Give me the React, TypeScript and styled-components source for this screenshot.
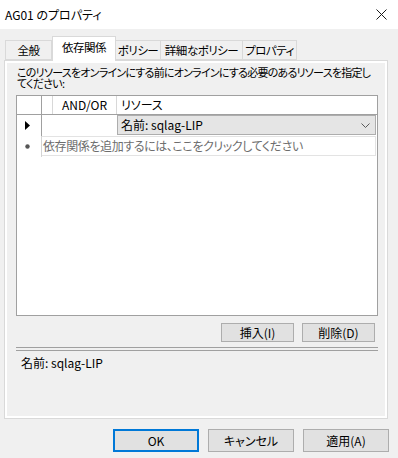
import React from 'react';
import styled, { createGlobalStyle } from 'styled-components';

const GlobalStyle = createGlobalStyle`
	html, body {
		margin: 0;
		padding: 0;
		background: #f0f0f0;
	}
	body {
		font-family: 'Noto Sans CJK JP', 'Noto Sans', sans-serif;
		font-size: 12px;
		color: #000;
		font-feature-settings: 'palt';
	}
`;

const tabs = [
	{ label: '全般', width: 47 },
	{ label: '依存関係', width: 64 },
	{ label: 'ポリシー', width: 45 },
	{ label: '詳細なポリシー', width: 82 },
	{ label: 'プロパティ', width: 54 },
];

const ACTIVE_TAB = 1;

const CloseIcon = () => (
	<svg width="11" height="11" viewBox="0 0 11 11">
		<path d="M0.5 0.5 L10.5 10.5 M10.5 0.5 L0.5 10.5" stroke="#1a1a1a" strokeWidth="1" fill="none" />
	</svg>
);

const Chevron = () => (
	<svg width="9" height="5" viewBox="0 0 9 5">
		<path d="M0.5 0.5 L4.5 4.5 L8.5 0.5" stroke="#5a5a5a" strokeWidth="1" fill="none" />
	</svg>
);

const CurrentRowMark = () => (
	<svg width="5" height="9" viewBox="0 0 5 9">
		<path d="M0 0 L5 4.5 L0 9 Z" fill="#000" />
	</svg>
);

const NewRowMark = () => (
	<svg width="5" height="5" viewBox="0 0 5 5">
		<circle cx="2.5" cy="2.5" r="2.2" fill="#555" />
	</svg>
);

const App = () => {
	return (
		<Window>
			<GlobalStyle />
			<TitleBar>
				<Title>AG01 のプロパティ</Title>
				<CloseButton>
					<CloseIcon />
				</CloseButton>
			</TitleBar>
			<Body>
				<TabStrip>
					{tabs.map((tab, idx) => (
						<Tab key={tab.label} $active={idx === ACTIVE_TAB} $width={tab.width}>
							{tab.label}
						</Tab>
					))}
				</TabStrip>
				<Panel>
					<Description>
						<Line>このリソースをオンラインにする前にオンラインにする必要のあるリソースを指定し</Line>
						<Line>てください:</Line>
					</Description>
					<Grid>
						<HeaderRow>
							<RowHeaderCell $dark />
							<HeaderCell $width={11} />
							<HeaderCell $width={64} $center>
								AND/OR
							</HeaderCell>
							<HeaderCell $grow>リソース</HeaderCell>
						</HeaderRow>
						<DataRow>
							<RowHeaderCell $dark>
								<CurrentRowMark />
							</RowHeaderCell>
							<PlainCell $width={75} />
							<ComboCell>
								<span>名前: sqlag-LIP</span>
								<Chevron />
							</ComboCell>
						</DataRow>
						<DataRow>
							<RowHeaderCell>
								<NewRowMark />
							</RowHeaderCell>
							<NewRowCell>依存関係を追加するには、ここをクリックしてください</NewRowCell>
						</DataRow>
					</Grid>
					<ActionRow>
						<SmallButton>挿入(I)</SmallButton>
						<SmallButton>削除(D)</SmallButton>
					</ActionRow>
					<Separator />
					<Selection>名前: sqlag-LIP</Selection>
				</Panel>
			</Body>
			<Footer>
				<DialogButton $default>OK</DialogButton>
				<DialogButton>キャンセル</DialogButton>
				<DialogButton>適用(A)</DialogButton>
			</Footer>
		</Window>
	);
};

export default App;

const Window = styled.div`
	width: 398px;
	height: 458px;
	display: flex;
	flex-direction: column;
	background: #f0f0f0;
	overflow: hidden;
`;

const TitleBar = styled.div`
	height: 29px;
	flex: none;
	background: #fff;
	display: flex;
	align-items: center;
	justify-content: space-between;
	padding: 0 11px 0 5px;
	box-sizing: border-box;
`;

const Title = styled.div`
	font-size: 12px;
	line-height: 14px;
`;

const CloseButton = styled.div`
	display: flex;
	align-items: center;
`;

const Body = styled.div`
	padding: 7px 10px 0 4px;
`;

const TabStrip = styled.div`
	height: 24px;
	display: flex;
	align-items: flex-end;
	padding-left: 1px;
	position: relative;
	z-index: 1;
`;

const Tab = styled.div<{ $active?: boolean; $width: number }>`
	box-sizing: border-box;
	width: ${(p) => p.$width}px;
	flex: none;
	height: ${(p) => (p.$active ? 25 : 20)}px;
	margin-bottom: ${(p) => (p.$active ? -1 : 0)}px;
	border: 1px solid #d9d9d9;
	border-bottom: ${(p) => (p.$active ? 'none' : '1px solid #d9d9d9')};
	border-left-width: ${(p) => (p.$active ? 1 : 0)}px;
	background: ${(p) => (p.$active ? '#fff' : '#f0f0f0')};
	display: flex;
	justify-content: center;
	padding-top: ${(p) => (p.$active ? 2 : 1)}px;
	white-space: nowrap;
	line-height: 16px;
	font-size: 11.5px;
	letter-spacing: -0.5px;
	&:first-child {
		border-left-width: 1px;
	}
`;

const Panel = styled.div`
	box-sizing: border-box;
	height: 359px;
	border: 1px solid #d9d9d9;
	box-shadow: inset 0 0 0 2px #fff;
	background: #f0f0f0;
	padding: 5px 9px 0 11px;
`;

const Description = styled.div`
	padding-left: 1px;
	font-size: 11px;
	letter-spacing: -0.75px;
`;

const Line = styled.div`
	line-height: 12px;
	height: 11px;
	white-space: nowrap;
	&:last-child {
		height: 12px;
	}
`;

const Grid = styled.div`
	margin-top: 6px;
	height: 221px;
	box-sizing: border-box;
	border: 1px solid #a0a0a0;
	background: #fff;
	display: flex;
	flex-direction: column;
`;

const HeaderRow = styled.div`
	height: 18px;
	display: flex;
	border-bottom: 1px solid #a0a0a0;
`;

const DataRow = styled.div`
	height: 21px;
	display: flex;
`;

const RowHeaderCell = styled.div<{ $dark?: boolean }>`
	width: 25px;
	flex: none;
	box-sizing: border-box;
	border-right: 1px solid ${(p) => (p.$dark ? '#a0a0a0' : '#d4d4d4')};
	display: flex;
	align-items: center;
	justify-content: center;
	padding-right: 4px;
`;

const HeaderCell = styled.div<{ $width?: number; $grow?: boolean; $center?: boolean }>`
	box-sizing: border-box;
	${(p) => (p.$grow ? 'flex: 1;' : `width: ${p.$width}px; flex: none;`)}
	border-right: ${(p) => (p.$grow ? 'none' : '1px solid #d8d8d8')};
	display: flex;
	align-items: center;
	justify-content: ${(p) => (p.$center ? 'center' : 'flex-start')};
	padding-left: ${(p) => (p.$center ? 0 : 4)}px;
	line-height: 14px;
`;

const PlainCell = styled.div<{ $width: number }>`
	width: ${(p) => p.$width}px;
	flex: none;
`;

const ComboCell = styled.div`
	flex: 1;
	margin: 0 1px 1px 0;
	box-sizing: border-box;
	background: #e5e5e5;
	border: 1px solid #adadad;
	display: flex;
	align-items: center;
	justify-content: space-between;
	padding: 0 5px 0 3px;
	line-height: 14px;
`;

const NewRowCell = styled.div`
	flex: 1;
	margin: 0 1px 1px 0;
	box-sizing: border-box;
	border: 1px solid #e3e3e3;
	border-left: none;
	color: #6d6d6d;
	display: flex;
	align-items: center;
	padding-left: 1px;
	line-height: 14px;
	white-space: nowrap;
	letter-spacing: -0.4px;
`;

const ActionRow = styled.div`
	display: flex;
	justify-content: flex-end;
	gap: 8px;
	padding-right: 3px;
	margin-top: 7px;
`;

const SmallButton = styled.div`
	width: 73px;
	height: 19px;
	box-sizing: border-box;
	background: #e1e1e1;
	border: 1px solid #adadad;
	display: flex;
	align-items: center;
	justify-content: center;
	line-height: 14px;
`;

const Separator = styled.div`
	margin-top: 5px;
	height: 4px;
	box-sizing: border-box;
	border-top: 1px solid #a0a0a0;
	border-bottom: 1px solid #a0a0a0;
`;

const Selection = styled.div`
	margin-top: 5px;
	padding-left: 5px;
	line-height: 14px;
`;

const Footer = styled.div`
	display: flex;
	justify-content: flex-end;
	gap: 9px;
	padding: 10px 9px 0 0;
`;

const DialogButton = styled.div<{ $default?: boolean }>`
	width: 86px;
	height: 23px;
	box-sizing: border-box;
	background: #e1e1e1;
	border: ${(p) => (p.$default ? '2px solid #0078d7' : '1px solid #adadad')};
	display: flex;
	align-items: center;
	justify-content: center;
	line-height: 14px;
`;
